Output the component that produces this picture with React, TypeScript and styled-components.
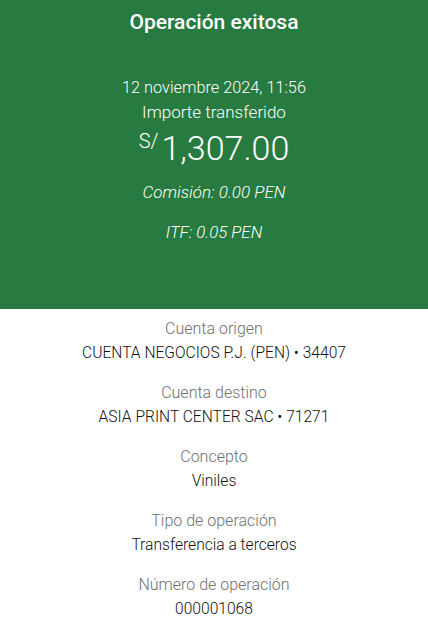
import React from "react";
import styled, { createGlobalStyle } from "styled-components";

const Global = createGlobalStyle`
  html, body { margin: 0; padding: 0; background: #ffffff; }
  body { font-family: Roboto, "Noto Sans", sans-serif; -webkit-font-smoothing: antialiased; }
`;

const Page = styled.div`
  width: 428px;
  display: flex;
  flex-direction: column;
`;

const Header = styled.header`
  background: #277b40;
  color: #ffffff;
  display: flex;
  flex-direction: column;
  align-items: center;
  padding: 10px 0 65px;
  text-align: center;
`;

const Title = styled.h1`
  margin: 0;
  font-size: 21px;
  line-height: 24px;
  font-weight: 500;
`;

const Line = styled.div<{ $top: number; $size: number; $italic?: boolean }>`
  margin-top: ${(p) => p.$top}px;
  font-size: ${(p) => p.$size}px;
  line-height: 24px;
  font-weight: 300;
  font-style: ${(p) => (p.$italic ? "italic" : "normal")};
`;

const Amount = styled.div`
  margin-top: 4px;
  display: flex;
  align-items: flex-start;
  gap: 3px;
  line-height: 40px;
  font-weight: 300;
`;

const Currency = styled.span`
  font-size: 20px;
  line-height: 26px;
`;

const Value = styled.span`
  font-size: 34px;
`;

const Details = styled.section`
  display: flex;
  flex-direction: column;
  align-items: center;
  gap: 16px;
  padding-top: 8px;
  text-align: center;
`;

const Item = styled.div`
  display: flex;
  flex-direction: column;
  align-items: center;
`;

const Label = styled.div`
  font-size: 16px;
  line-height: 24px;
  font-weight: 300;
  color: #6f6f6f;
`;

const Data = styled.div`
  font-size: 15.6px;
  line-height: 24px;
  font-weight: 300;
  color: #121212;
`;

const items = [
  ["Cuenta origen", "CUENTA NEGOCIOS P.J. (PEN) • 34407"],
  ["Cuenta destino", "ASIA PRINT CENTER SAC • 71271"],
  ["Concepto", "Viniles"],
  ["Tipo de operación", "Transferencia a terceros"],
  ["Número de operación", "000001068"],
];

export default function App() {
  return (
    <Page>
      <Global />
      <Header>
        <Title>Operación exitosa</Title>
        <Line $top={42} $size={16.3}>12 noviembre 2024, 11:56</Line>
        <Line $top={0} $size={17}>Importe transferido</Line>
        <Amount>
          <Currency>S/</Currency>
          <Value>1,307.00</Value>
        </Amount>
        <Line $top={12} $size={17} $italic>Comisión: 0.00 PEN</Line>
        <Line $top={16} $size={16.8} $italic>ITF: 0.05 PEN</Line>
      </Header>
      <Details>
        {items.map(([l, v]) => (
          <Item key={l}>
            <Label>{l}</Label>
            <Data>{v}</Data>
          </Item>
        ))}
      </Details>
    </Page>
  );
}
